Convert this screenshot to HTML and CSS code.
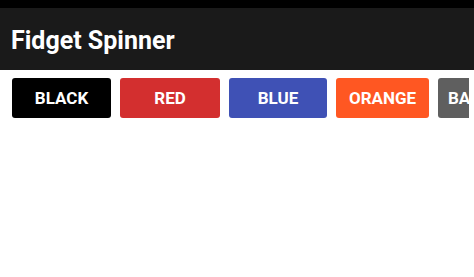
FILE: index.html
```html
<!DOCTYPE html>
<html lang="en">
  <head>
    <meta charset="UTF-8">
    <meta name="viewport" content="width=device-width, initial-scale=1.0">
    <title>Fidget Spinner</title>
    <link rel="stylesheet" href="styles.css">
  </head>
  <body>
    <div class="status-bar"></div>
    <header class="app-bar">
      <h1 class="title">Fidget Spinner</h1>
    </header>
    <div class="colors">
      <div class="color-list">
        <button class="color-btn black">BLACK</button>
        <button class="color-btn red">RED</button>
        <button class="color-btn blue">BLUE</button>
        <button class="color-btn orange">ORANGE</button>
        <button class="color-btn grey">BASE</button>
      </div>
    </div>
  </body>
</html>
```
FILE: styles.css
```css
body {
    margin: 0;
    background-color: #fff;
    font-family: Roboto, "Liberation Sans", sans-serif;
    overflow: hidden;
}

.status-bar {
    height: 8px;
    background-color: #000;
}

.app-bar {
    height: 62px;
    background-color: #1a1a1a;
    display: flex;
    align-items: center;
    padding-left: 11px;
}

.title {
    margin: 0;
    color: #fff;
    font-size: 25px;
    font-weight: 700;
    padding-top: 2px;
}

.colors {
    margin-right: 5px;
    overflow: hidden;
}

.color-list {
    display: flex;
    gap: 9px;
    padding: 8px 0 0 12px;
}

.color-btn {
    flex: none;
    width: 99px;
    height: 40px;
    border: none;
    border-radius: 3px;
    color: #fff;
    font-family: Roboto, "Liberation Sans", sans-serif;
    font-size: 17px;
    font-weight: 700;
    padding: 0;
}

.black {
    background-color: #000;
}

.red {
    background-color: #d32f2f;
    width: 100px;
}

.blue {
    background-color: #3f51b5;
    width: 98px;
}

.orange {
    background-color: #ff5722;
    width: 93px;
}

.grey {
    background-color: #5f5f5f;
    text-align: left;
    padding-left: 10px;
}
```
